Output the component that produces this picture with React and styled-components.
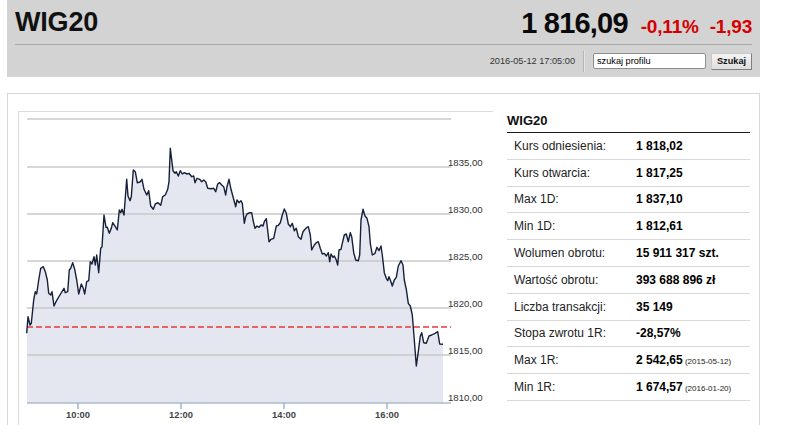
import React from "react";
import styled, { createGlobalStyle } from "styled-components";

const Global = createGlobalStyle`
  html, body { margin: 0; padding: 0; background: #fff; overflow: hidden; }
  body { font-family: "Liberation Sans", Arial, sans-serif; color: #222; }
  * { box-sizing: border-box; }
`;

const Header = styled.header`
  margin-left: 7px;
  width: 753px;
  height: 77px;
  background: #d3d3d3;
`;

const TopRow = styled.div`
  margin: 0 8px;
  height: 45px;
  border-bottom: 1px solid #a9a9a9;
  display: flex;
  justify-content: space-between;
  align-items: flex-start;
`;

const Title = styled.h1`
  margin: 9px 0 0;
  font-size: 27px;
  line-height: 1;
  font-weight: 700;
  color: #111;
  letter-spacing: -0.2px;
`;

const PriceGroup = styled.div`
  margin-top: 9px;
  display: flex;
  align-items: baseline;
`;

const Price = styled.span`
  font-size: 29px;
  line-height: 1;
  font-weight: 700;
  color: #0a0a0a;
  letter-spacing: -0.8px;
`;

const Change = styled.span`
  margin-left: ${(p) => p.$gap}px;
  font-size: 19px;
  line-height: 1;
  font-weight: 700;
  color: #d40000;
  letter-spacing: -0.2px;
`;

const BottomRow = styled.div`
  height: 32px;
  padding-right: 8px;
  display: flex;
  justify-content: flex-end;
  align-items: center;
`;

const Stamp = styled.span`
  font-size: 9.2px;
  color: #333;
`;

const Divider = styled.span`
  width: 1px;
  height: 21px;
  margin: 0 9px 0 8px;
  background: #b5b5b5;
  box-shadow: 1px 0 0 #e4e4e4;
`;

const SearchInput = styled.input`
  width: 113px;
  height: 16px;
  padding: 0 3px;
  border: 1px solid #8e8e8e;
  border-radius: 2px;
  background: #fff;
  font-family: "Liberation Sans", Arial, sans-serif;
  font-size: 9.2px;
  color: #000;
  outline: none;
`;

const SearchButton = styled.button`
  margin-left: 5px;
  width: 41px;
  height: 17px;
  padding: 0;
  border: 1px solid #c8c8c8;
  border-right-color: #7f7f7f;
  border-bottom-color: #7f7f7f;
  background: linear-gradient(#f4f4f4, #dedede);
  font-family: "Liberation Sans", Arial, sans-serif;
  font-size: 9.2px;
  font-weight: 700;
  color: #111;
`;

const Panel = styled.section`
  margin: 16px 0 0 7px;
  width: 753px;
  height: 345px;
  border: 1px solid #d6d6d6;
  padding: 17px 0 0 10px;
  display: flex;
  align-items: flex-start;
  overflow: hidden;
`;

const ChartFrame = styled.div`
  width: 475px;
  height: 330px;
  border-top: 1px solid #dcdcdc;
  border-left: 1px solid #dcdcdc;
  flex-shrink: 0;
`;

const ChartSvg = styled.svg`
  display: block;
`;

const Stats = styled.div`
  margin-top: -17px;
  margin-left: 14px;
  width: 243px;
`;

const StatsTitle = styled.div`
  height: 39px;
  border-bottom: 1px solid #1a1a1a;
  display: flex;
  align-items: flex-end;
  padding-bottom: 5px;
  font-size: 13px;
  line-height: 1;
  font-weight: 700;
  color: #111;
`;

const StatRow = styled.div`
  height: 26.8px;
  border-bottom: 1px solid #d9d9d9;
  display: grid;
  grid-template-columns: 129px 1fr;
  align-items: center;
  font-size: 12px;
`;

const StatLabel = styled.span`
  padding-left: 7px;
  color: #222;
`;

const StatValue = styled.span`
  font-weight: 700;
  color: #000;
`;

const StatNote = styled.span`
  font-size: 8px;
  font-weight: 400;
  color: #222;
`;

const pts = [[26.7,333.3],[28,316.7],[30,325],[31.3,323.3],[33.7,300],[35.3,291.7],[36.7,294],[38.7,280],[40.7,268.3],[43.3,266.7],[45.3,271.7],[47.3,280],[48.7,293.3],[50.7,295],[52,291.7],[54,306],[56,301.7],[59.3,296],[64,288.3],[65.3,292.7],[67.7,291.7],[69.3,270],[70.7,268.3],[72.7,262.7],[74.7,269.3],[76.7,280],[78.7,294],[81.3,284],[83.3,288.3],[84.7,294],[86.7,281.7],[88.7,280.7],[90.3,261.7],[92,264],[94,256.7],[95.3,265],[96.7,255],[98.7,272.7],[100.7,248.3],[102,246.7],[104,215],[106,227.3],[107.3,227.3],[109.3,233.3],[111.3,228.3],[112.7,222.7],[115.3,226.7],[117.3,230],[119.3,210],[120.7,212.7],[122,209.3],[124,215],[126.7,179.3],[128,196],[130,200.7],[131.3,196.7],[133.3,170],[135.3,171.7],[137.3,182.7],[140,182],[142,179.3],[144,189.3],[146.7,195],[148.7,190.7],[150.7,206],[153.3,209.3],[155.3,204],[158,202.7],[160.7,205.3],[162.7,196.7],[165.3,195],[167.7,189.3],[169,181.7],[170.3,148.3],[171.7,160],[173,170.7],[175,173.3],[176.3,171.7],[178.3,176],[180.3,170.7],[182.3,174],[184.3,172.7],[187,174],[189,173.3],[191.7,176.7],[193.7,176],[195,182.7],[197,178.3],[199.7,179.3],[201.7,181.7],[203.7,180],[205.7,181.7],[207.7,188.3],[211,188.7],[213.7,188.3],[215.7,191.7],[217.7,184],[219.7,182.7],[221.7,185],[223.7,186.7],[225.7,195],[227,186.7],[229,179.3],[231,189.3],[233,196.7],[235.7,206.7],[237,200],[239,202.7],[241,200.7],[242.3,203.3],[244.3,223.3],[245.7,216.7],[247,214],[249.7,212.7],[251.7,212.7],[253,220],[255,228.3],[257,226],[259,227.3],[261,225],[263,226],[264.3,221.7],[266.3,218.7],[269,241.7],[271,239.3],[273.7,238.3],[276.3,226],[278.3,225.3],[280.3,222.7],[282.3,215],[284.3,209],[286.3,213.3],[288.3,224],[290.3,226.7],[292.3,223.3],[294.3,230.7],[296.3,228.3],[298.3,236.7],[301,239.3],[303,231.7],[305,229.3],[307,227.3],[308.3,226.7],[310.3,235],[311.7,250],[314.3,245],[316.3,242.7],[318.3,241.7],[320.3,248.3],[322.3,254],[324.3,253.3],[326.3,256],[328.3,252.7],[329.7,261.7],[331,254],[333,257.3],[334.3,256],[336.3,260],[337.7,265],[339,250],[341,249.3],[342.3,243.3],[344.3,235],[346.3,234],[348.3,241.7],[350.3,232.7],[351.7,236.7],[353.7,252.7],[355.7,260],[358.3,260.7],[359.7,255],[361,220],[363,209.3],[365,216],[367,218.3],[369,226.7],[370.3,243.3],[372.3,255],[375,253.3],[377,247.3],[379,250.7],[381,246],[382.3,255],[384.3,272.7],[386.3,278.3],[387.7,280.7],[389,276.7],[390.3,280],[392.3,286],[394.3,280],[396.3,277.3],[398.3,266],[401,260.7],[403,265],[404.3,280],[406.3,289.3],[408.3,303.3],[410.3,306],[412.3,315],[414.3,340],[416.3,366],[418.3,351.7],[420.3,336],[421.7,332.7],[423.7,342.7],[426.3,343.3],[429,336],[431.7,335],[435,333.3],[437.7,331.7],[439.7,344],[443,344.3]];

const linePath = "M" + pts.map((p) => p.join(",")).join(" L");
const areaPath = `M27,403 L27,${pts[0][1]} ` + pts.map((p) => "L" + p.join(",")).join(" ") + ` L443,403 Z`;

const grid = [
  { y: 119, label: null },
  { y: 167, label: "1835,00" },
  { y: 214, label: "1830,00" },
  { y: 261, label: "1825,00" },
  { y: 308, label: "1820,00" },
  { y: 355, label: "1815,00" },
];

const ticks = [
  { x: 78, label: "10:00" },
  { x: 181, label: "12:00" },
  { x: 284, label: "14:00" },
  { x: 387, label: "16:00" },
];

function Chart() {
  return (
    <ChartSvg width="474" height="320" viewBox="19 112 474 320">
      <path d={areaPath} fill="#e4e7ef" />
      {grid.map((g) => (
        <g key={g.y}>
          <line x1="27" x2="451" y1={g.y} y2={g.y} stroke="#c9c9c9" strokeWidth="1.5" />
          {g.label && (
            <text x="448" y={g.y - 1.5} fontSize="9.6" fill="#333" fontFamily="'Liberation Sans', Arial, sans-serif">
              {g.label}
            </text>
          )}
        </g>
      ))}
      <line x1="27" x2="451" y1="327" y2="327" stroke="#e8383a" strokeWidth="1.3" strokeDasharray="6 3" />
      <path d={linePath} fill="none" stroke="#16203a" strokeWidth="1.4" strokeLinejoin="round" />
      <line x1="27" x2="451" y1="403" y2="403" stroke="#aebbcd" strokeWidth="1.5" />
      <text x="448" y="401" fontSize="9.6" fill="#333" fontFamily="'Liberation Sans', Arial, sans-serif">1810,00</text>
      {ticks.map((t) => (
        <g key={t.x}>
          <line x1={t.x} x2={t.x} y1="403" y2="409" stroke="#a4b4ca" strokeWidth="1.5" />
          <text x={t.x} y="417.5" textAnchor="middle" fontSize="9.4" fontWeight="700" fill="#444" fontFamily="'Liberation Sans', Arial, sans-serif">
            {t.label}
          </text>
        </g>
      ))}
    </ChartSvg>
  );
}

const stats = [
  ["Kurs odniesienia:", "1 818,02"],
  ["Kurs otwarcia:", "1 817,25"],
  ["Max 1D:", "1 837,10"],
  ["Min 1D:", "1 812,61"],
  ["Wolumen obrotu:", "15 911 317 szt."],
  ["Wartość obrotu:", "393 688 896 zł"],
  ["Liczba transakcji:", "35 149"],
  ["Stopa zwrotu 1R:", "-28,57%"],
  ["Max 1R:", "2 542,65", "(2015-05-12)"],
  ["Min 1R:", "1 674,57", "(2016-01-20)"],
];

export default function App() {
  return (
    <>
      <Global />
      <Header>
        <TopRow>
          <Title>WIG20</Title>
          <PriceGroup>
            <Price>1 816,09</Price>
            <Change $gap={13}>-0,11%</Change>
            <Change $gap={11}>-1,93</Change>
          </PriceGroup>
        </TopRow>
        <BottomRow>
          <Stamp>2016-05-12 17:05:00</Stamp>
          <Divider />
          <SearchInput defaultValue="szukaj profilu" />
          <SearchButton>Szukaj</SearchButton>
        </BottomRow>
      </Header>
      <Panel>
        <ChartFrame>
          <Chart />
        </ChartFrame>
        <Stats>
          <StatsTitle>WIG20</StatsTitle>
          {stats.map(([label, value, note]) => (
            <StatRow key={label}>
              <StatLabel>{label}</StatLabel>
              <StatValue>
                {value}
                {note && <StatNote> {note}</StatNote>}
              </StatValue>
            </StatRow>
          ))}
        </Stats>
      </Panel>
    </>
  );
}
